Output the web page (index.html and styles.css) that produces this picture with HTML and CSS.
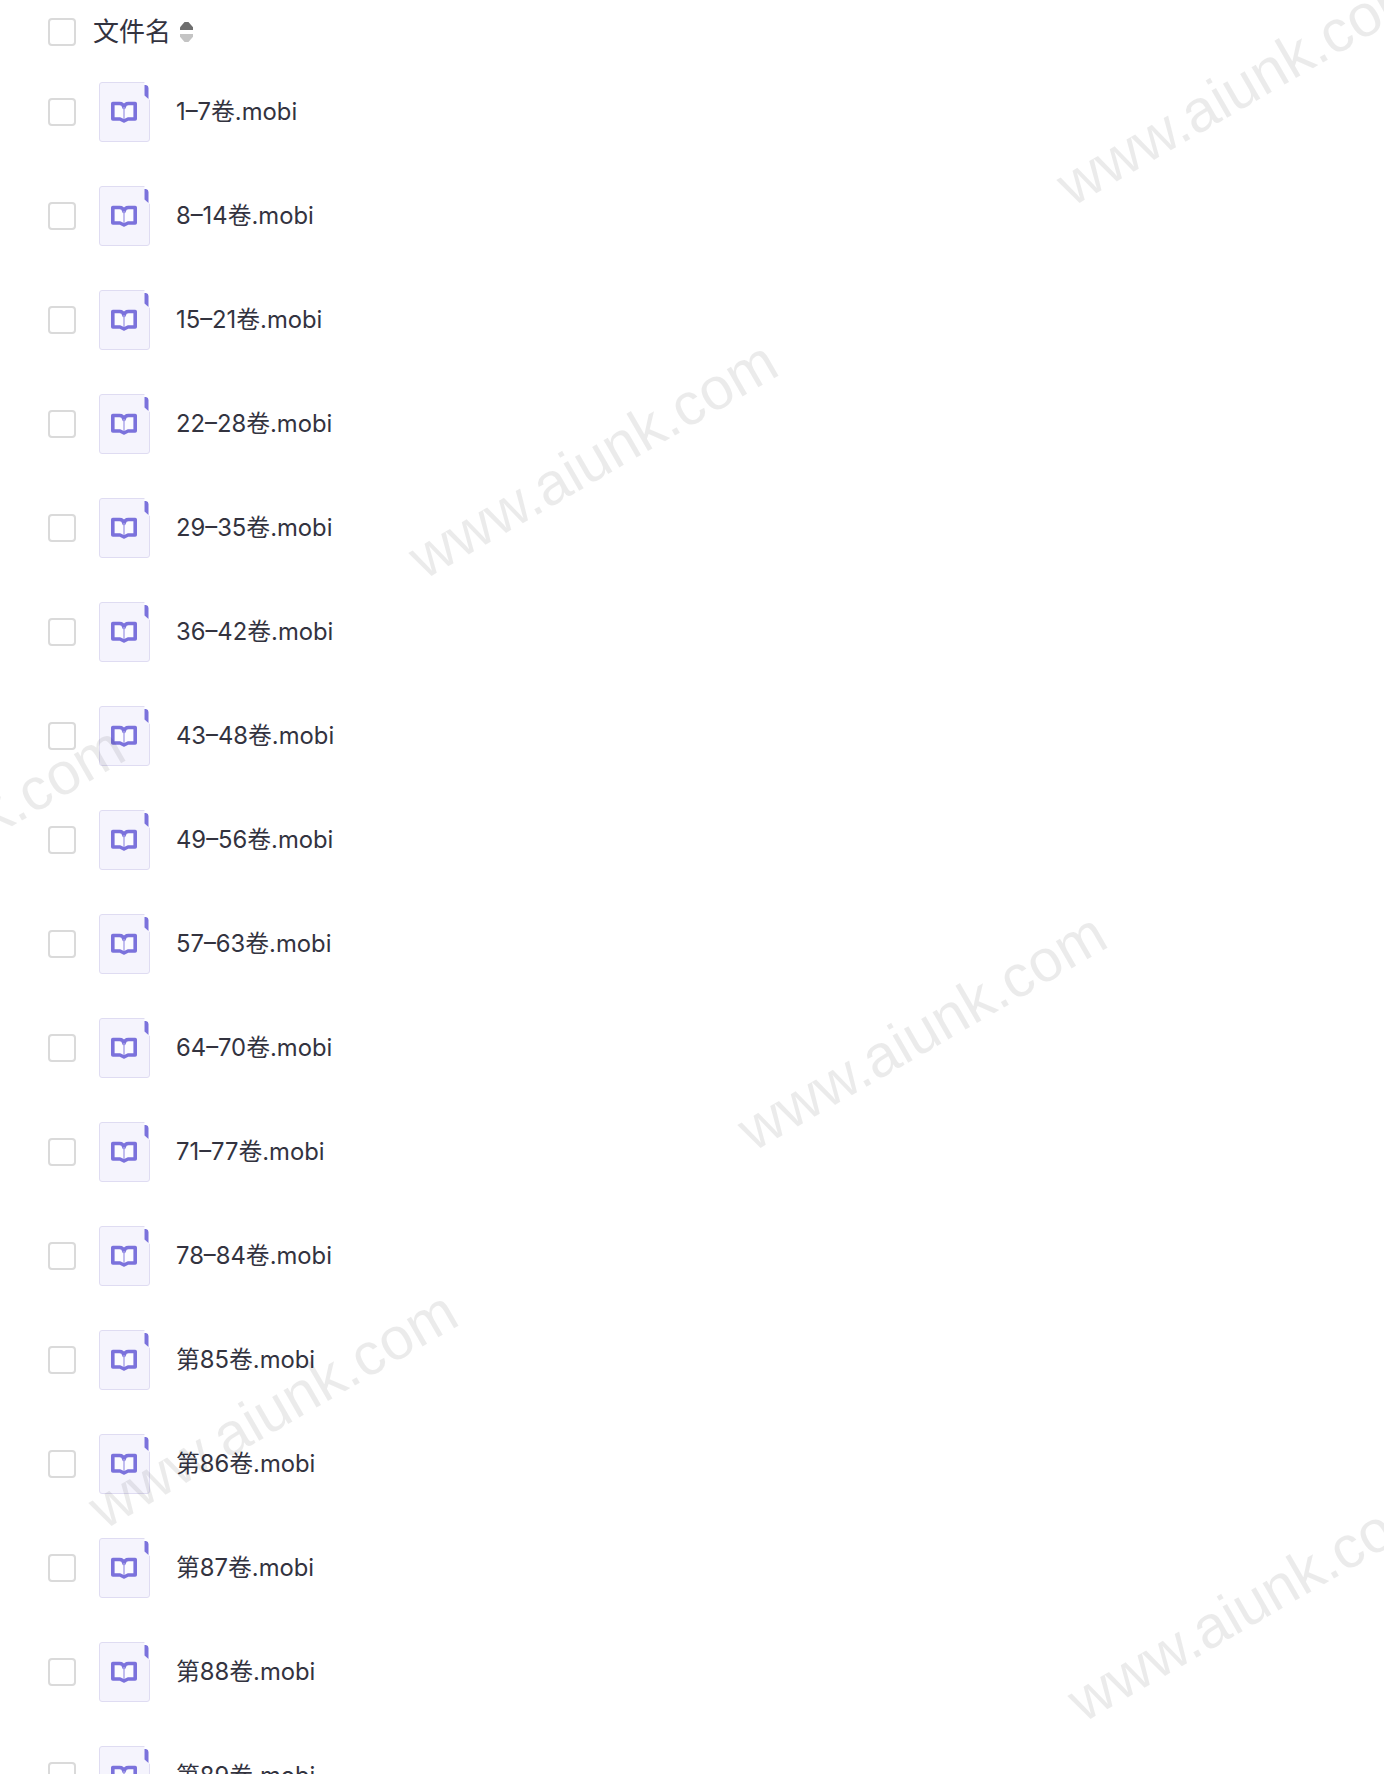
FILE: index.html
```html
<!DOCTYPE html>
<html>
<head>
    <title>文件列表</title>
    <link rel="stylesheet" href="styles.css">
</head>
<body>
    <svg class="defs" width="0" height="0">
        <symbol id="fileIcon" viewBox="0 0 51 60">
            <rect x="0.5" y="0.5" width="50" height="59" rx="2.5" fill="#f5f4fd" stroke="#dfdcf2"/>
            <path d="M45.5 0 H51 V18 L45.5 14 Z" fill="#fff"/>
            <path d="M45.5 3 L47 3 Q49.500 3.500 49.500 6 V17 L45.500 13.500 Z" fill="#7b72dc"/>
            <path d="M13.800 21.500 H20.500 C23 21.500 24.500 22.500 25 25.500 C25.500 22.500 27 21.500 29.500 21.500 H36.200 V37 H29 L25 39 L21 37 H13.800 Z" fill="#fbfbff" stroke="#7b72dc" stroke-width="3.6" stroke-linejoin="round"/>
            <path d="M25 25 V37" fill="none" stroke="#a8a2e8" stroke-width="1.4"/>
        </symbol>
    </svg>

    <div class="file-list">
        <div class="list-head">
            <span class="check"></span>
            <span class="head-title">文件名</span>
            <span class="sort">
                <i class="sort-up"></i>
                <i class="sort-down"></i>
            </span>
        </div>

        <div class="file-row"><span class="check"></span><svg class="file-icon"><use href="#fileIcon"/></svg><span class="file-name">1–7卷.mobi</span></div>
        <div class="file-row"><span class="check"></span><svg class="file-icon"><use href="#fileIcon"/></svg><span class="file-name">8–14卷.mobi</span></div>
        <div class="file-row"><span class="check"></span><svg class="file-icon"><use href="#fileIcon"/></svg><span class="file-name">15–21卷.mobi</span></div>
        <div class="file-row"><span class="check"></span><svg class="file-icon"><use href="#fileIcon"/></svg><span class="file-name">22–28卷.mobi</span></div>
        <div class="file-row"><span class="check"></span><svg class="file-icon"><use href="#fileIcon"/></svg><span class="file-name">29–35卷.mobi</span></div>
        <div class="file-row"><span class="check"></span><svg class="file-icon"><use href="#fileIcon"/></svg><span class="file-name">36–42卷.mobi</span></div>
        <div class="file-row"><span class="check"></span><svg class="file-icon"><use href="#fileIcon"/></svg><span class="file-name">43–48卷.mobi</span></div>
        <div class="file-row"><span class="check"></span><svg class="file-icon"><use href="#fileIcon"/></svg><span class="file-name">49–56卷.mobi</span></div>
        <div class="file-row"><span class="check"></span><svg class="file-icon"><use href="#fileIcon"/></svg><span class="file-name">57–63卷.mobi</span></div>
        <div class="file-row"><span class="check"></span><svg class="file-icon"><use href="#fileIcon"/></svg><span class="file-name">64–70卷.mobi</span></div>
        <div class="file-row"><span class="check"></span><svg class="file-icon"><use href="#fileIcon"/></svg><span class="file-name">71–77卷.mobi</span></div>
        <div class="file-row"><span class="check"></span><svg class="file-icon"><use href="#fileIcon"/></svg><span class="file-name">78–84卷.mobi</span></div>
        <div class="file-row"><span class="check"></span><svg class="file-icon"><use href="#fileIcon"/></svg><span class="file-name">第85卷.mobi</span></div>
        <div class="file-row"><span class="check"></span><svg class="file-icon"><use href="#fileIcon"/></svg><span class="file-name">第86卷.mobi</span></div>
        <div class="file-row"><span class="check"></span><svg class="file-icon"><use href="#fileIcon"/></svg><span class="file-name">第87卷.mobi</span></div>
        <div class="file-row"><span class="check"></span><svg class="file-icon"><use href="#fileIcon"/></svg><span class="file-name">第88卷.mobi</span></div>
        <div class="file-row"><span class="check"></span><svg class="file-icon"><use href="#fileIcon"/></svg><span class="file-name">第89卷.mobi</span></div>
    </div>

    <!-- Watermarks -->
    <div class="wm wm-1">www.aiunk.com</div>
    <div class="wm wm-2">www.aiunk.com</div>
    <div class="wm wm-3">www.aiunk.com</div>
    <div class="wm wm-4">www.aiunk.com</div>
    <div class="wm wm-5">www.aiunk.com</div>
    <div class="wm wm-6">www.aiunk.com</div>
</body>
</html>
```

FILE: styles.css
```css
html, body {
    margin: 0;
    height: 1774px;
    overflow: hidden;
    background: #fff;
}
body {
    position: relative;
    font-family: Inter, "Noto Sans CJK SC", sans-serif;
    color: #33333f;
}
.defs {
    position: absolute;
}
.file-list {
    padding-left: 48px;
}
.check {
    flex: none;
    display: block;
    box-sizing: border-box;
    width: 28px;
    height: 28px;
    border: 2px solid #dadada;
    border-radius: 4px;
    background: #fff;
}
.list-head {
    display: flex;
    align-items: center;
    height: 28px;
    padding: 18px 0 14px;
}
.head-title {
    margin-left: 17px;
    font-size: 26px;
    line-height: 28px;
}
.sort {
    display: flex;
    flex-direction: column;
    gap: 4px;
    margin-left: 9px;
}
.sort i {
    display: block;
    width: 13px;
    height: 8px;
}
.sort-up {
    background: #6e6e6e;
    clip-path: polygon(35% 0, 65% 0, 100% 65%, 100% 100%, 0 100%, 0 65%);
}
.sort-down {
    background: #c4c4c4;
    clip-path: polygon(0 0, 100% 0, 100% 35%, 65% 100%, 35% 100%, 0 35%);
}
.file-row {
    display: flex;
    align-items: center;
    height: 104px;
}
.file-icon {
    flex: none;
    width: 51px;
    height: 60px;
    margin-left: 22.5px;
}
.file-name {
    margin-left: 26.5px;
    font-size: 23.8px;
    line-height: 32px;
}
.wm {
    position: absolute;
    font-family: "Liberation Sans", Arial, sans-serif;
    font-size: 59.5px;
    line-height: 60px;
    white-space: nowrap;
    color: rgba(0, 0, 0, 0.08);
    transform: rotate(-30deg);
    transform-origin: left bottom;
}
.wm-1 { left: 1077px; top: 156px; }
.wm-2 { left: 429px; top: 529px; }
.wm-3 { left: 758px; top: 1101px; }
.wm-4 { left: 109px; top: 1479px; }
.wm-5 { left: 1088px; top: 1672px; }
.wm-6 { left: -224px; top: 914px; }
```
